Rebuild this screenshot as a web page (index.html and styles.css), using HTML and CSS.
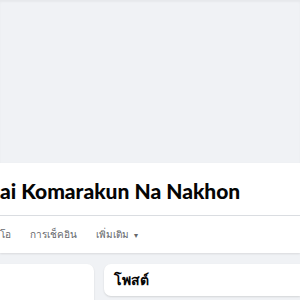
FILE: index.html
```html
<!DOCTYPE html>
<html lang="th">
<head>
    <meta charset="UTF-8">
    <title>Komarakun Na Nakhon</title>
    <link rel="stylesheet" href="styles.css">
</head>
<body>
    <div class="cover"></div>

    <div class="profile-header">
        <h1 class="name">ai Komarakun Na Nakhon</h1>
        <nav class="tabs">
            <a class="tab">โอ</a>
            <a class="tab">การเช็คอิน</a>
            <a class="tab">เพิ่มเติม <span class="caret">&#9662;</span></a>
        </nav>
    </div>

    <div class="content">
        <div class="card card-side"></div>
        <div class="card card-main">
            <h2 class="card-title">โพสต์</h2>
        </div>
    </div>
</body>
</html>
```

FILE: styles.css
```css
:root {
    --color-bg: #f0f2f5;
    --color-card: #ffffff;
    --color-text: #050505;
    --color-text-secondary: #65676b;
    --color-divider: #dadde1;
}

* {
    margin: 0;
    padding: 0;
    box-sizing: border-box;
}

body {
    font-family: "Liberation Sans", "Noto Sans", Arial, sans-serif;
    background-color: var(--color-bg);
    color: var(--color-text);
    width: 300px;
    height: 300px;
    overflow: hidden;
}

.cover {
    height: 163px;
    background-color: var(--color-bg);
    box-shadow: inset 0 2px 2px rgba(0, 0, 0, 0.04);
}

.profile-header {
    background-color: var(--color-card);
    box-shadow: 0 1px 2px rgba(0, 0, 0, 0.1);
    height: 90px;
}

.name {
    font-family: Lato, "Liberation Sans", sans-serif;
    font-size: 21px;
    font-weight: 900;
    line-height: 28px;
    padding-top: 14px;
    height: 53px;
    border-bottom: 1px solid var(--color-divider);
    white-space: nowrap;
}

.tabs {
    display: flex;
    gap: 19px;
    height: 36px;
    align-items: center;
    font-size: 10px;
    color: var(--color-text-secondary);
}

.tab {
    white-space: nowrap;
}

.caret {
    font-size: 8px;
    margin-left: 2px;
}

.content {
    display: flex;
    gap: 10px;
    padding-top: 11px;
    align-items: flex-start;
}

.card {
    background-color: var(--color-card);
    border-radius: 7px;
    box-shadow: 0 1px 2px rgba(0, 0, 0, 0.12);
}

.card-side {
    width: 94px;
    height: 60px;
    border-top-left-radius: 0;
}

.card-main {
    flex: 1;
    height: 32px;
    padding: 0 10px;
    display: flex;
    align-items: center;
    border-top-right-radius: 0;
    border-bottom-right-radius: 0;
}

.card-title {
    font-size: 14px;
    font-weight: bold;
}
```
